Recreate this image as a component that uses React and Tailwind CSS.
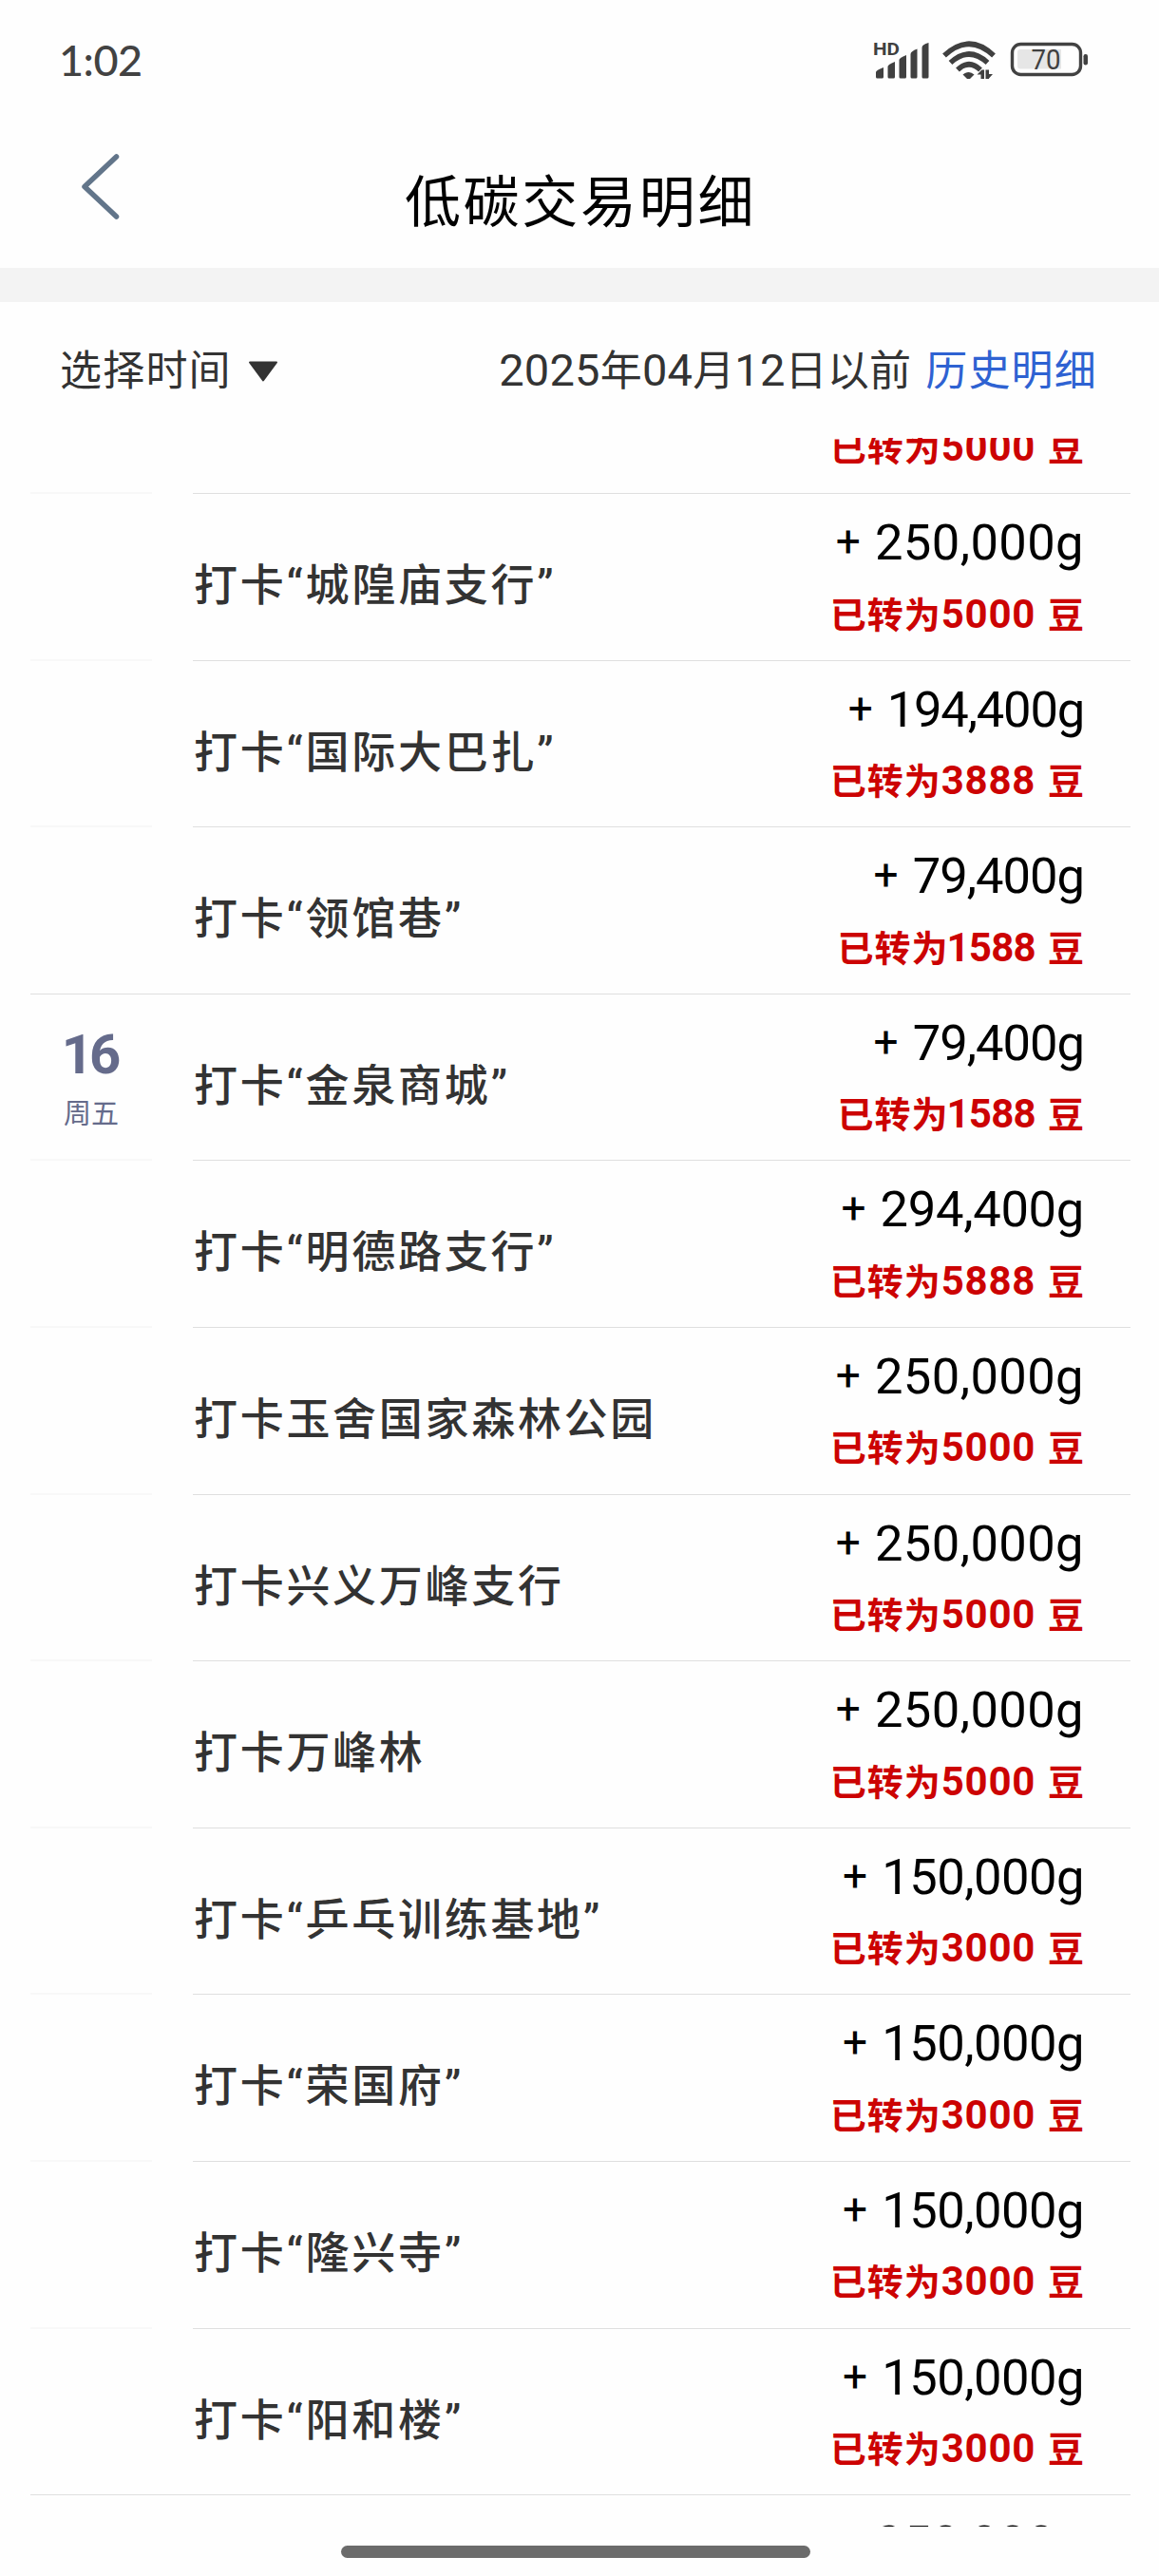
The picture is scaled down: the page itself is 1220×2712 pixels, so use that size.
const rows = [
  { title: "", amount: "250,000", beans: "5000" },
  { title: "打卡“城隍庙支行”", amount: "250,000", beans: "5000" },
  { title: "打卡“国际大巴扎”", amount: "194,400", beans: "3888" },
  { title: "打卡“领馆巷”", amount: "79,400", beans: "1588", dayEnd: true },
  { title: "打卡“金泉商城”", amount: "79,400", beans: "1588", day: "16", week: "周五" },
  { title: "打卡“明德路支行”", amount: "294,400", beans: "5888" },
  { title: "打卡玉舍国家森林公园", amount: "250,000", beans: "5000" },
  { title: "打卡兴义万峰支行", amount: "250,000", beans: "5000" },
  { title: "打卡万峰林", amount: "250,000", beans: "5000" },
  { title: "打卡“乒乓训练基地”", amount: "150,000", beans: "3000" },
  { title: "打卡“荣国府”", amount: "150,000", beans: "3000" },
  { title: "打卡“隆兴寺”", amount: "150,000", beans: "3000" },
  { title: "打卡“阳和楼”", amount: "150,000", beans: "3000", dayEnd: true },
  { title: "", amount: "250,000", beans: "5000" },
];

const amountTracking = {
  "250,000": "tracking-[0.4px]",
  "294,400": "tracking-[-0.3px]",
  "194,400": "tracking-[-1.2px]",
  "150,000": "tracking-[-0.5px]",
  "79,400": "tracking-[-1px]",
};

function StatusBar() {
  return (
    <div className="flex h-[126px] items-center justify-between pr-[75px] pl-[62px]">
      <span className="font-['Lato'] text-[45px] leading-none font-medium tracking-[-0.5px] text-[#424242]">1:02</span>
      <div className="flex items-center">
        <svg width="226" height="40" viewBox="0 0 226 40" fill="#404040">
          <text x="0" y="14.500" fontSize="17.5" fontWeight="700" textLength="28" lengthAdjust="spacingAndGlyphs">HD</text>
          <path d="M3 38V33q0-2 8-5v10q0 1.500-1.500 1.500h-5Q3 39.500 3 38z" />
          <path d="M15.500 38V27q0-2 7.500-5v16q0 1.500-1.500 1.500H17q-1.500 0-1.500-1.500z" />
          <path d="M27.500 38V20q0-2 7.500-5v23q0 1.500-1.500 1.500H29q-1.500 0-1.500-1.500z" />
          <path d="M39.500 38V14q0-3 7-5.500V38q0 1.500-1.500 1.500h-4q-1.500 0-1.500-1.500z" />
          <path d="M51.500 38V7q0-3 7-5V38q0 1.500-1.500 1.500h-4q-1.500 0-1.500-1.500z" />
          <g fill="none" stroke="#404040" strokeWidth="5.500">
            <path d="M75 15.500Q101-9 127 15.500" />
            <path d="M81.500 23Q101 5 120.500 23" />
            <path d="M89 30.500Q101 19 113 30.500" />
          </g>
          <path d="M94.500 35.500q6.500-5 12 0l-5 5q-1 .8-2 0z" />
          <path d="M109.500 35.500l5-5h2.500v12h-3.500v-7zM118.500 30.500h3.500v4.500h4l-4 4.500v3h-3.500z" />
          <rect x="146.500" y="3.500" width="72" height="32" rx="9" fill="none" stroke="#424242" strokeWidth="3.400" />
          <path d="M152 12q0-3 3-3h43v20.500h-43q-3 0-3-3z" fill="#e6e6e6" />
          <rect x="221.500" y="14" width="4.500" height="11.500" rx="2.200" />
          <text x="166.500" y="30" fontSize="29" textLength="31" lengthAdjust="spacingAndGlyphs">70</text>
        </svg>
      </div>
    </div>
  );
}

function Row({ row }) {
  return (
    <div className="flex h-[175.6px] shrink-0">
      <div className={row.dayEnd ? "w-[171px] shrink-0 border-b border-[#dfdfdf]" : "w-[171px] shrink-0"}>
        <div className={row.dayEnd ? "h-full w-[128px] text-center" : "h-full w-[128px] border-b-2 border-[#f8f8f8] text-center"}>
          {row.day && (
            <div className="pt-[33px] text-[#656b8b]">
              <div className="pr-[4px] text-[58px] leading-[60px] font-bold tracking-[-4px]">{row.day}</div>
              <div className="mt-[15px] text-[29px] leading-[36px]">{row.week}</div>
            </div>
          )}
        </div>
      </div>
      <div className="flex h-full grow justify-between border-b border-[#dfdfdf] pr-[49px]">
        <div className="pt-[64px] pl-[1px] text-[46px] leading-[64px] font-medium tracking-[2.7px] whitespace-nowrap text-[#333]">
          {row.title}
        </div>
        <div className="flex flex-col items-end pt-[19px] whitespace-nowrap">
          <div className="flex items-start gap-[15px] text-[52.5px] leading-[64px] text-black">
            <span className="text-[46px] leading-[62px]">+</span>
            <span className={amountTracking[row.amount]}>{row.amount}g</span>
          </div>
          <div className="mt-[17.500px] flex items-baseline text-[38px] leading-[52px] font-bold text-[#cc0303]">
            <span className="tracking-[1px]">已转为</span>
            <span className={row.beans === "1588" ? "mr-[13px] -ml-[2px] text-[42px] tracking-[-0.7px]" : "mr-[13px] text-[42px] tracking-[0.7px]"}>
              {row.beans}
            </span>
            <span>豆</span>
          </div>
        </div>
      </div>
    </div>
  );
}

export default function App() {
  return (
    <div className="flex h-[2712px] w-[1220px] flex-col overflow-hidden bg-[#fefefe] font-['Roboto','Noto_Sans_CJK_SC',sans-serif]">
      <StatusBar />
      <header className="flex h-[156px] items-start px-[84px]">
        <svg className="mt-[34px] shrink-0" width="44" height="72" viewBox="0 0 44 72" fill="none" stroke="#62758a" strokeWidth="5.500" strokeLinecap="round" strokeLinejoin="round">
          <path d="M38.500 5L5 36.500 38.500 68" />
        </svg>
        <h1 className="mt-[44px] grow pr-[42px] text-center text-[59px] leading-[88px] tracking-[2.700px] text-black">低碳交易明细</h1>
      </header>
      <div className="h-[36px] shrink-0 bg-[#f3f3f3]" />
      <div className="flex h-[143px] shrink-0 items-start justify-between pt-[40px] pr-[65px] pl-[63px] text-[44px] leading-[66px] text-[#333]">
        <div className="flex items-center">
          <span className="tracking-[1.200px]">选择时间</span>
          <svg className="ml-[17px]" width="32" height="22" viewBox="0 0 32 22" fill="#333" stroke="#333" strokeWidth="2" strokeLinejoin="round">
            <path d="M2 1.500h28L16 20.500z" />
          </svg>
        </div>
        <div className="-mt-px flex items-baseline">
          <span className="tracking-[0.2px]">
            <span className="text-[47px]">2025</span>年<span className="text-[47px]">04</span>月<span className="text-[47px]">12</span>日以前
          </span>
          <span className="ml-[15px] tracking-[1.200px] text-[#2e62d2]">历史明细</span>
        </div>
      </div>
      <main className="flex h-[2199px] shrink-0 flex-col justify-start overflow-hidden pr-[30px] pl-[32px]">
        <div className="-mt-[116.600px] flex flex-col">
          {rows.map((row, i) => (
            <Row key={i} row={row} />
          ))}
        </div>
      </main>
      <div className="flex grow items-start justify-center pr-[8px] pt-[20px]">
        <div className="h-[13px] w-[494px] rounded-full bg-[#6b6b6b]" />
      </div>
    </div>
  );
}
